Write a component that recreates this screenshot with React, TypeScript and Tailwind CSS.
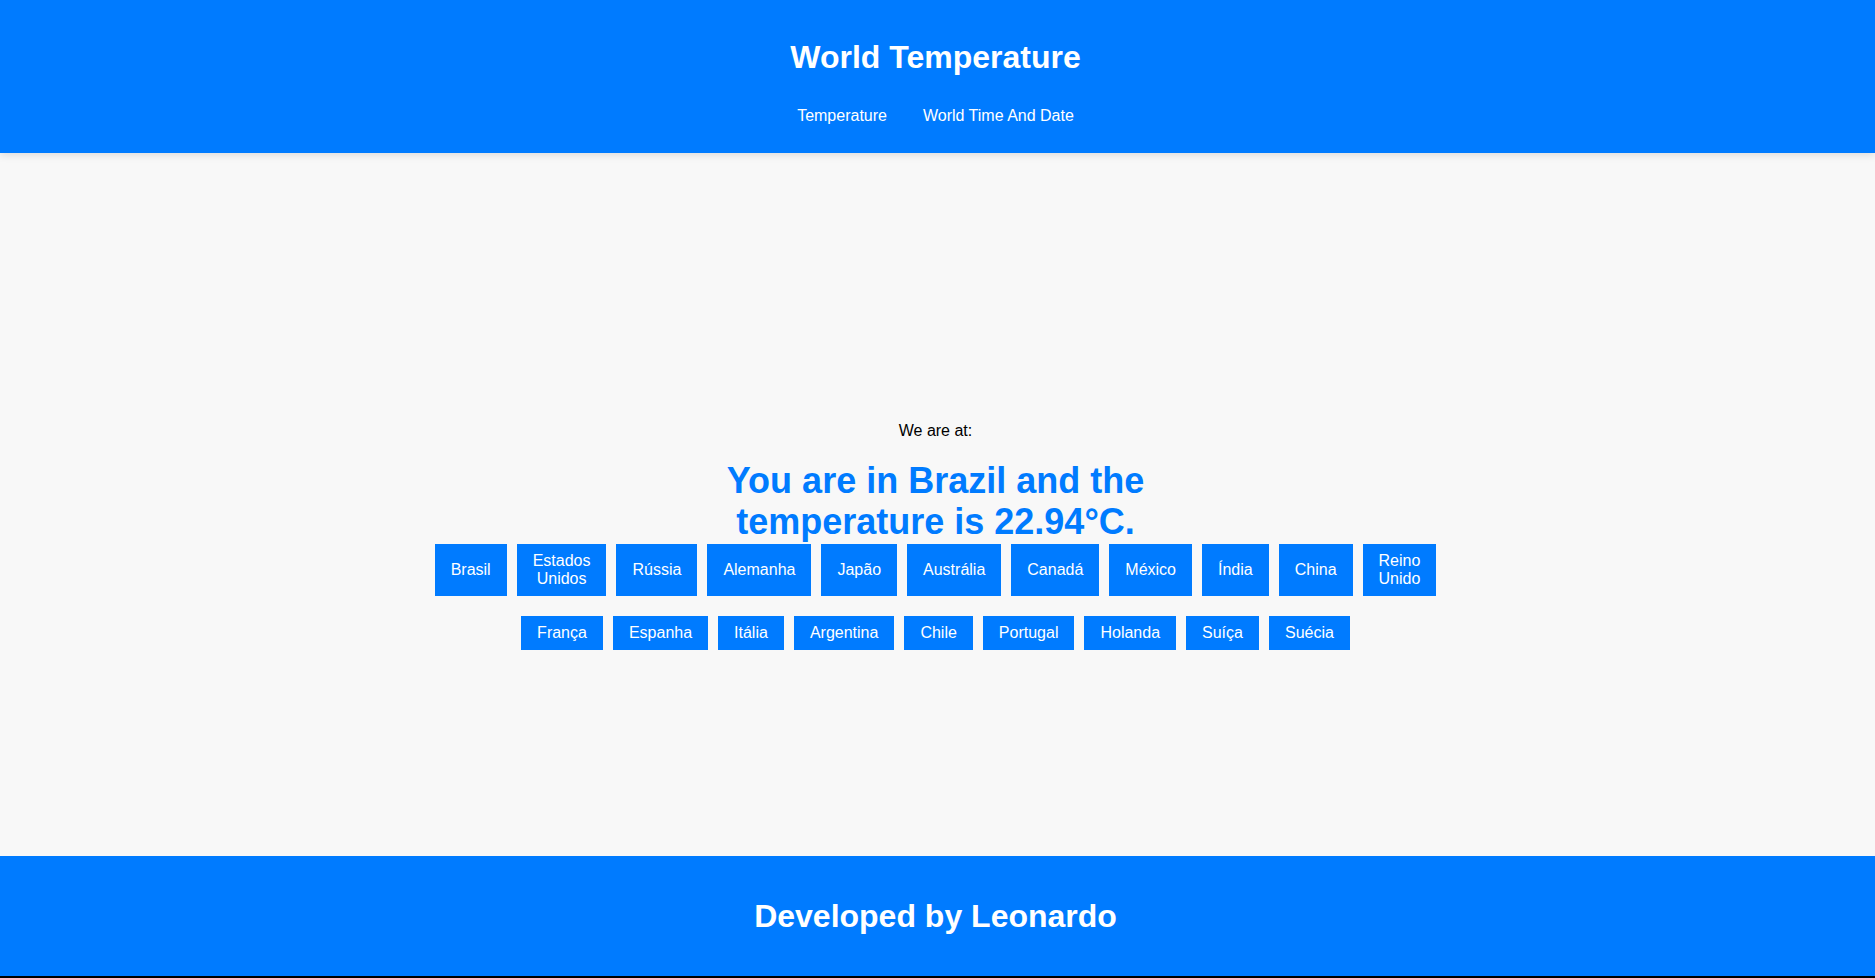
import React from "react";

const row1 = [
  "Brasil",
  "Estados Unidos",
  "Rússia",
  "Alemanha",
  "Japão",
  "Austrália",
  "Canadá",
  "México",
  "Índia",
  "China",
  "Reino Unido",
];
const row2 = [
  "França",
  "Espanha",
  "Itália",
  "Argentina",
  "Chile",
  "Portugal",
  "Holanda",
  "Suíça",
  "Suécia",
];

function CountryButton({ name }: { name: string }) {
  return (
    <button className="w-min bg-[#007bff] px-4 py-2 text-center text-base leading-[18px] text-white">
      {name}
    </button>
  );
}

export default function App() {
  return (
    <div className="flex min-h-screen flex-col bg-[#f8f8f8] font-['Liberation_Sans',Arial,sans-serif]">
      <header className="relative z-10 bg-[#007bff] pb-[28px] pr-[4px] pt-[39px] text-center text-white shadow-[0_2px_8px_rgba(0,0,0,0.12)]">
        <h1 className="text-[32px] font-bold leading-[37px]">World Temperature</h1>
        <nav className="mt-[31px] flex justify-center gap-[36px] text-base leading-[18px]">
          <a href="#" className="text-white">Temperature</a>
          <a href="#" className="text-white">World Time And Date</a>
        </nav>
      </header>

      <main className="flex flex-1 flex-col items-center pr-[4px] pt-[269px]">
        <p className="text-base leading-[18px] text-black">We are at:</p>
        <h2 className="mt-[20px] w-[520px] text-center text-[36px] font-bold leading-[41px] text-[#007bff]">
          You are in Brazil and the temperature is 22.94°C.
        </h2>
        <div className="mt-[2px] flex justify-center gap-[10px]">
          {row1.map((c) => (
            <CountryButton key={c} name={c} />
          ))}
        </div>
        <div className="mt-[20px] flex justify-center gap-[10px]">
          {row2.map((c) => (
            <CountryButton key={c} name={c} />
          ))}
        </div>
      </main>

      <footer className="flex h-[122px] items-center justify-center border-b-2 border-black bg-[#007bff] pr-[4px] text-white">
        <h2 className="text-[32px] font-bold leading-[37px]">Developed by Leonardo</h2>
      </footer>
    </div>
  );
}
